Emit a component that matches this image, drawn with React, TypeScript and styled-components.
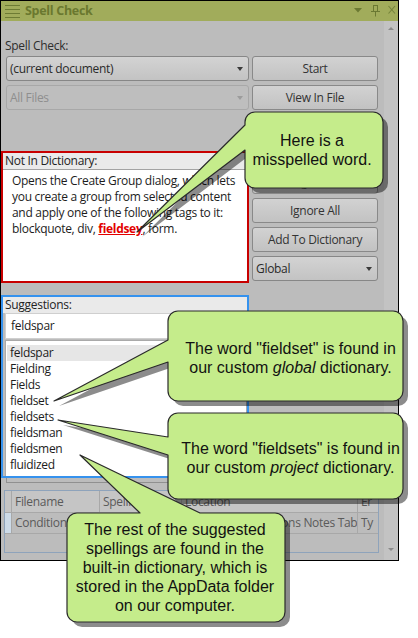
import React from "react";
import styled, { createGlobalStyle } from "styled-components";

const UI = `"Open Sans", "Noto Sans", sans-serif`;
const CALLOUT_FONT = `"Liberation Sans", Arial, sans-serif`;

const GlobalStyle = createGlobalStyle`
  html, body { margin: 0; padding: 0; background: #ffffff; }
  body { font-family: ${UI}; }
  * { box-sizing: border-box; }
`;

const Stage = styled.div`
  position: relative;
  width: 418px;
  height: 638px;
  overflow: hidden;
  background: #ffffff;
`;

const Window = styled.div`
  width: 399px;
  height: 561px;
  border: 1px solid #000;
  display: flex;
  flex-direction: column;
  background: #bcbcbc;
  font-family: ${UI};
  font-size: 12px;
  letter-spacing: -0.3px;
  color: #262626;
`;

const TitleBar = styled.div`
  flex: none;
  height: 20px;
  background: #a1ac5b;
  display: flex;
  align-items: stretch;
  padding-left: 3px;
  gap: 5px;
`;

const Title = styled.span`
  flex: 1;
  font-weight: 700;
  font-size: 12.5px;
  line-height: 20px;
  color: #6a782f;
`;

const Body = styled.div`
  flex: 1;
  min-height: 0;
  display: flex;
`;

const Content = styled.div`
  flex: 1;
  display: flex;
  flex-direction: column;
`;

const TopArea = styled.div`
  display: flex;
  gap: 3px;
`;

const LeftCol = styled.div`
  width: 248px;
  display: flex;
  flex-direction: column;
`;

const RightCol = styled.div`
  width: 126px;
  display: flex;
  flex-direction: column;
  padding-top: 35px;
`;

const ButtonGroup = styled.div<{ $mt: number }>`
  display: flex;
  flex-direction: column;
  gap: 4px;
  margin-top: ${(p) => p.$mt}px;
`;

const FieldLabel = styled.div`
  padding: 17px 0 0 4px;
  line-height: 16px;
  color: #2e2e2e;
`;

const Combo = styled.div<{ $disabled?: boolean; $mt?: number; $ml?: number }>`
  height: 25px;
  margin-top: ${(p) => p.$mt ?? 0}px;
  margin-left: ${(p) => p.$ml ?? 0}px;
  display: flex;
  align-items: center;
  justify-content: space-between;
  padding: 0 5px 0 3px;
  border: 1px solid ${(p) => (p.$disabled ? "#a8a8a8" : "#878787")};
  border-radius: 3px;
  background: ${(p) => (p.$disabled ? "#bebebe" : "linear-gradient(#d3d3d3, #c3c3c3)")};
  color: ${(p) => (p.$disabled ? "#8e8e8e" : "#2a2a2a")};
`;

const Caret = styled.span<{ $disabled?: boolean }>`
  width: 0;
  height: 0;
  border-left: 3.5px solid transparent;
  border-right: 3.5px solid transparent;
  border-top: 4px solid ${(p) => (p.$disabled ? "#9c9c9c" : "#3a3a3a")};
`;

const Button = styled.div`
  height: 25px;
  display: flex;
  align-items: center;
  justify-content: center;
  border: 1px solid #898989;
  border-radius: 3px;
  background: linear-gradient(#d2d2d2, #c2c2c2);
  color: #333;
`;

const Panel = styled.div<{ $color: string; $mt: number; $h: number }>`
  margin-top: ${(p) => p.$mt}px;
  height: ${(p) => p.$h}px;
  border: 2px solid ${(p) => p.$color};
  display: flex;
  flex-direction: column;
`;

const PanelHeader = styled.div<{ $rule?: boolean }>`
  flex: none;
  height: ${(p) => (p.$rule ? 17 : 16)}px;
  line-height: 16px;
  padding-left: 2px;
  background: #eaeaea;
  border-bottom: ${(p) => (p.$rule ? "1px solid #a3a3a3" : "none")};
  color: #232323;
`;

const ParagraphBox = styled.div`
  flex: 1;
  background: #fff;
  padding: 3px 9px 0 9px;
  line-height: 16px;
  white-space: nowrap;
  color: #1c1c1c;
`;

const Misspelled = styled.span`
  color: #e30000;
  font-weight: 700;
  text-decoration: underline;
`;

const SuggestInput = styled.div`
  flex: none;
  height: 26px;
  margin: 0 1px 0 2px;
  background: #fff;
  border: 1px solid #cfcfcf;
  padding-left: 5px;
  line-height: 24px;
  color: #1c1c1c;
`;

const ListBox = styled.div`
  flex: 1;
  margin: 1px 0 0 2px;
  background: #fff;
  border: 1px solid #a9a9a9;
  border-bottom: none;
  padding: 4px 1px 0 1px;
`;

const ListItem = styled.div<{ $selected?: boolean }>`
  height: 16px;
  line-height: 16px;
  padding-left: 3px;
  background: ${(p) => (p.$selected ? "#e6e6e6" : "transparent")};
  color: #1c1c1c;
`;

const GroupFoot = styled.div`
  width: 242px;
  height: 5px;
  margin-left: 5px;
  border-left: 1px solid #909090;
  border-bottom: 1px solid #909090;
`;

const TableBox = styled.div`
  width: 375px;
  height: 63px;
  margin: 7px 0 0 3px;
  border: 1px solid #8ea3bb;
  display: flex;
  flex-direction: column;
`;

const TableRow = styled.div<{ $h: number }>`
  display: grid;
  grid-template-columns: 7px 88px 82px 176px 20px;
  height: ${(p) => p.$h}px;
`;

const Cell = styled.div<{ $head?: boolean; $marker?: boolean }>`
  border-right: 1px solid #a8a8a8;
  border-bottom: 1px solid #a8a8a8;
  background: ${(p) => (p.$marker ? "#cddbe8" : p.$head ? "#c5c5c5" : "transparent")};
  padding-left: 3px;
  line-height: ${(p) => (p.$head ? 21 : 20)}px;
  color: #5a5a5a;
  white-space: nowrap;
  overflow: hidden;
  &:last-child { border-right: none; }
`;

const Scrollbar = styled.div`
  width: 14px;
  background: #c3c3c3;
  display: flex;
  flex-direction: column;
  align-items: center;
  justify-content: space-between;
  padding: 6px 0 9px 0;
`;

const ArrowUp = styled.span`
  width: 0;
  height: 0;
  border-left: 3px solid transparent;
  border-right: 3px solid transparent;
  border-bottom: 3px solid #8a8a8a;
`;

const ArrowDown = styled.span`
  width: 0;
  height: 0;
  border-left: 3px solid transparent;
  border-right: 3px solid transparent;
  border-top: 3px solid #8a8a8a;
`;

const Overlay = styled.svg`
  position: absolute;
  left: 0;
  top: 0;
  pointer-events: none;
`;

const CalloutText = styled.div<{ $x: number; $y: number; $w: number; $h: number }>`
  position: absolute;
  left: ${(p) => p.$x}px;
  top: ${(p) => p.$y}px;
  width: ${(p) => p.$w}px;
  height: ${(p) => p.$h}px;
  display: flex;
  align-items: center;
  justify-content: center;
  text-align: center;
  white-space: nowrap;
  font-family: ${CALLOUT_FONT};
  font-size: 16px;
  line-height: 19px;
  color: #121212;
  pointer-events: none;
`;

type Tail = { side: "left" | "top"; a: number; b: number; tip: [number, number] };
type Bubble = { x: number; y: number; w: number; h: number; tail: Tail };

function bubblePath({ x, y, w, h, tail }: Bubble, dx = 0, dy = 0): string {
  const r = 10;
  const X = x + dx;
  const Y = y + dy;
  const R = X + w;
  const B = Y + h;
  const tip = `${tail.tip[0] + dx} ${tail.tip[1] + dy}`;
  let d = `M ${X + r} ${Y}`;
  if (tail.side === "top") d += ` L ${tail.a + dx} ${Y} L ${tip} L ${tail.b + dx} ${Y}`;
  d += ` L ${R - r} ${Y} A ${r} ${r} 0 0 1 ${R} ${Y + r} L ${R} ${B - r} A ${r} ${r} 0 0 1 ${R - r} ${B}`;
  d += ` L ${X + r} ${B} A ${r} ${r} 0 0 1 ${X} ${B - r}`;
  if (tail.side === "left") d += ` L ${X} ${tail.b + dy} L ${tip} L ${X} ${tail.a + dy}`;
  d += ` L ${X} ${Y + r} A ${r} ${r} 0 0 1 ${X + r} ${Y} Z`;
  return d;
}

const bubbles: Bubble[] = [
  { x: 245, y: 112, w: 138, h: 76, tail: { side: "left", a: 125, b: 150, tip: [137, 232] } },
  { x: 168, y: 311, w: 235, h: 90, tail: { side: "left", a: 340, b: 362, tip: [54, 401] } },
  { x: 168, y: 413, w: 235, h: 86, tail: { side: "left", a: 437, b: 455, tip: [58, 420] } },
  { x: 67, y: 513, w: 218, h: 109, tail: { side: "top", a: 140, b: 200, tip: [80, 455] } },
];

const MenuIcon = () => (
  <svg width="16" height="20" viewBox="0 0 16 20">
    {[4.5, 8.5, 12.5, 16.5].map((y) => (
      <line key={y} x1="1" y1={y} x2="16" y2={y} stroke="#6d7b34" strokeWidth="1" />
    ))}
  </svg>
);

const TitleIcons = () => (
  <svg width="46" height="20" viewBox="0 0 46 20">
    <polygon points="2,7 10,7 6,11.5" fill="#6b7932" />
    <rect x="21.5" y="4.5" width="4" height="6" fill="none" stroke="#6b7932" strokeWidth="1" />
    <line x1="19" y1="10.5" x2="28" y2="10.5" stroke="#6b7932" strokeWidth="1" />
    <line x1="23.5" y1="10.5" x2="23.5" y2="15.5" stroke="#6b7932" strokeWidth="1" />
    <line x1="36.5" y1="5" x2="43" y2="12.5" stroke="#75833b" strokeWidth="1.1" />
    <line x1="43" y1="5" x2="36.5" y2="12.5" stroke="#75833b" strokeWidth="1.1" />
  </svg>
);

const suggestions = ["feldspar", "Fielding", "Fields", "fieldset", "fieldsets", "fieldsman", "fieldsmen", "fluidized"];

export default function App() {
  return (
    <Stage>
      <GlobalStyle />
      <Window>
        <TitleBar>
          <MenuIcon />
          <Title>Spell Check</Title>
          <TitleIcons />
        </TitleBar>
        <Body>
          <Content>
            <TopArea>
              <LeftCol>
                <FieldLabel>Spell Check:</FieldLabel>
                <Combo $mt={2} $ml={5}>
                  <span>(current document)</span>
                  <Caret />
                </Combo>
                <Combo $mt={4} $ml={5} $disabled>
                  <span>All Files</span>
                  <Caret $disabled />
                </Combo>
                <Panel $color="#c80000" $mt={41} $h={132}>
                  <PanelHeader $rule>Not In Dictionary:</PanelHeader>
                  <ParagraphBox>
                    Opens the Create Group dialog, which lets
                    <br />
                    you create a group from selected content
                    <br />
                    and apply one of the following tags to it:
                    <br />
                    blockquote, div, <Misspelled>fieldsey</Misspelled>, form.
                  </ParagraphBox>
                </Panel>
                <Panel $color="#3592ee" $mt={12} $h={183}>
                  <PanelHeader>Suggestions:</PanelHeader>
                  <SuggestInput>feldspar</SuggestInput>
                  <ListBox>
                    {suggestions.map((s, i) => (
                      <ListItem key={s} $selected={i === 0}>
                        {s}
                      </ListItem>
                    ))}
                  </ListBox>
                </Panel>
              </LeftCol>
              <RightCol>
                <ButtonGroup $mt={0}>
                  <Button>Start</Button>
                  <Button>View In File</Button>
                </ButtonGroup>
                <ButtonGroup $mt={59}>
                  <Button>Ignore</Button>
                  <Button>Ignore All</Button>
                  <Button>Add To Dictionary</Button>
                  <Combo>
                    <span>Global</span>
                    <Caret />
                  </Combo>
                </ButtonGroup>
                <ButtonGroup $mt={35}>
                  <Button>Change</Button>
                  <Button>Change All</Button>
                </ButtonGroup>
              </RightCol>
            </TopArea>
            <GroupFoot />
            <TableBox>
              <TableRow $h={22}>
                <Cell $head />
                <Cell $head>Filename</Cell>
                <Cell $head>Spelling</Cell>
                <Cell $head>Location</Cell>
                <Cell $head>Er</Cell>
              </TableRow>
              <TableRow $h={21}>
                <Cell $marker />
                <Cell>Conditions Notes Tab.htm</Cell>
                <Cell>fieldsey</Cell>
                <Cell>All Dialogs\Conditions Notes Table</Cell>
                <Cell>Ty</Cell>
              </TableRow>
            </TableBox>
          </Content>
          <Scrollbar>
            <ArrowUp />
            <ArrowDown />
          </Scrollbar>
        </Body>
      </Window>

      <Overlay width="418" height="638" viewBox="0 0 418 638">
        {bubbles.map((b, i) => (
          <g key={i}>
            <path d={bubblePath(b, 5, 5)} fill="rgba(0,0,0,0.45)" />
            <path d={bubblePath(b)} fill="#c5ec8b" stroke="#2a2a2a" strokeWidth="1.2" strokeLinejoin="round" />
          </g>
        ))}
      </Overlay>

      <CalloutText $x={243} $y={112} $w={138} $h={76}>
        <span>
          Here is a
          <br />
          misspelled word.
        </span>
      </CalloutText>
      <CalloutText $x={173} $y={313} $w={235} $h={90}>
        <span>
          The word "fieldset" is found in
          <br />
          our custom <i>global</i> dictionary.
        </span>
      </CalloutText>
      <CalloutText $x={173} $y={415} $w={235} $h={86}>
        <span>
          The word "fieldsets" is found in
          <br />
          our custom <i>project</i> dictionary.
        </span>
      </CalloutText>
      <CalloutText $x={66} $y={513} $w={218} $h={109}>
        <span>
          The rest of the suggested
          <br />
          spellings are found in the
          <br />
          built-in dictionary, which is
          <br />
          stored in the AppData folder
          <br />
          on our computer.
        </span>
      </CalloutText>
    </Stage>
  );
}
